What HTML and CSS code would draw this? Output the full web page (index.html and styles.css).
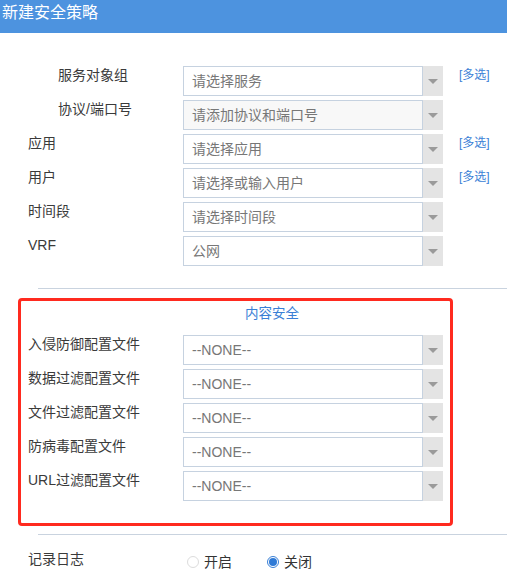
FILE: index.html
```html
<!DOCTYPE html>
<html lang="zh-CN">
<head>
<meta charset="utf-8">
<title>新建安全策略</title>
<link rel="stylesheet" href="styles.css">
</head>
<body>
<div class="header">新建安全策略</div>
<div class="form-top">
  <div class="row">
    <div class="label indent">服务对象组</div>
    <div class="select"><div class="field">请选择服务</div><div class="arrow"></div></div>
    <a class="multi">[多选]</a>
  </div>
  <div class="row">
    <div class="label indent">协议/端口号</div>
    <div class="select"><div class="field disabled">请添加协议和端口号</div><div class="arrow"></div></div>
  </div>
  <div class="row">
    <div class="label">应用</div>
    <div class="select"><div class="field">请选择应用</div><div class="arrow"></div></div>
    <a class="multi">[多选]</a>
  </div>
  <div class="row">
    <div class="label">用户</div>
    <div class="select"><div class="field">请选择或输入用户</div><div class="arrow"></div></div>
    <a class="multi">[多选]</a>
  </div>
  <div class="row">
    <div class="label">时间段</div>
    <div class="select"><div class="field">请选择时间段</div><div class="arrow"></div></div>
  </div>
  <div class="row">
    <div class="label">VRF</div>
    <div class="select"><div class="field">公网</div><div class="arrow"></div></div>
  </div>
</div>
<div class="divider"></div>
<div class="box">
  <div class="box-title">内容安全</div>
  <div class="box-rows">
    <div class="row">
      <div class="label">入侵防御配置文件</div>
      <div class="select"><div class="field">--NONE--</div><div class="arrow"></div></div>
    </div>
    <div class="row">
      <div class="label">数据过滤配置文件</div>
      <div class="select"><div class="field">--NONE--</div><div class="arrow"></div></div>
    </div>
    <div class="row">
      <div class="label">文件过滤配置文件</div>
      <div class="select"><div class="field">--NONE--</div><div class="arrow"></div></div>
    </div>
    <div class="row">
      <div class="label">防病毒配置文件</div>
      <div class="select"><div class="field">--NONE--</div><div class="arrow"></div></div>
    </div>
    <div class="row">
      <div class="label">URL过滤配置文件</div>
      <div class="select"><div class="field">--NONE--</div><div class="arrow"></div></div>
    </div>
  </div>
</div>
<div class="divider divider-bottom"></div>
<div class="log-row">
  <div class="label">记录日志</div>
  <div class="radios">
    <span class="radio"><span class="dot"></span>开启</span>
    <span class="radio on"><span class="dot"></span>关闭</span>
  </div>
</div>
</body>
</html>
```
FILE: styles.css
```css
html, body {
  margin: 0;
  padding: 0;
  background: #fff;
  overflow: hidden;
}
body {
  width: 507px;
  height: 575px;
  font-family: "Liberation Sans", "Noto Sans CJK SC", sans-serif;
  font-size: 14px;
  color: #3a3a3a;
}
.header {
  height: 33px;
  background: #4d93df;
  color: #fff;
  font-size: 16px;
  line-height: 26px;
  padding-left: 2px;
}
.form-top {
  padding-top: 33px;
  display: flex;
  flex-direction: column;
  gap: 4px;
}
.row {
  display: flex;
  height: 30px;
}
.label {
  width: 183px;
  box-sizing: border-box;
  padding-left: 28px;
  line-height: 18px;
  white-space: nowrap;
}
.label.indent {
  padding-left: 58px;
}
.select {
  display: flex;
  width: 260px;
  height: 30px;
}
.field {
  width: 240px;
  box-sizing: border-box;
  border: 1px solid #c6d2e0;
  background: #fff;
  color: #777;
  line-height: 28px;
  padding-left: 8px;
  white-space: nowrap;
  overflow: hidden;
}
.field.disabled {
  background: #f8f8f8;
}
.arrow {
  width: 20px;
  background: #e4e4e4;
  display: flex;
  align-items: center;
  justify-content: center;
}
.arrow::after {
  content: "";
  width: 0;
  height: 0;
  border-left: 5px solid transparent;
  border-right: 5px solid transparent;
  border-top: 5px solid #9a9a9a;
}
.multi {
  margin-left: 16px;
  font-size: 12px;
  color: #3a80d6;
  line-height: 18px;
}
.divider {
  margin-top: 22px;
  margin-left: 38px;
  height: 1px;
  background: #c9d3df;
}
.box {
  margin-top: 9px;
  margin-left: 18px;
  width: 435px;
  height: 228px;
  box-sizing: border-box;
  border: 3px solid #ff2a1f;
  border-radius: 4px;
  padding-top: 3px;
}
.box-title {
  padding-left: 224px;
  color: #3a80d6;
  font-size: 13.5px;
  line-height: 20px;
}
.box-rows {
  margin-top: 11px;
  display: flex;
  flex-direction: column;
  gap: 4px;
}
.box-rows .label {
  width: 162px;
  padding-left: 7px;
}
.divider-bottom {
  margin-top: 8px;
}
.log-row {
  display: flex;
  margin-top: 15px;
}
.radios {
  display: flex;
  padding-top: 2px;
  padding-left: 4px;
}
.radio {
  display: flex;
  align-items: center;
  line-height: 20px;
  color: #333;
  width: 80px;
}
.dot {
  width: 12px;
  height: 12px;
  box-sizing: border-box;
  border: 1px solid #dcdcdc;
  border-radius: 50%;
  background: #fff;
  margin-right: 5px;
  display: flex;
  align-items: center;
  justify-content: center;
}
.radio.on .dot {
  border-color: #3a80d6;
}
.radio.on .dot::after {
  content: "";
  width: 8px;
  height: 8px;
  border-radius: 50%;
  background: #2f7ad6;
}
```
